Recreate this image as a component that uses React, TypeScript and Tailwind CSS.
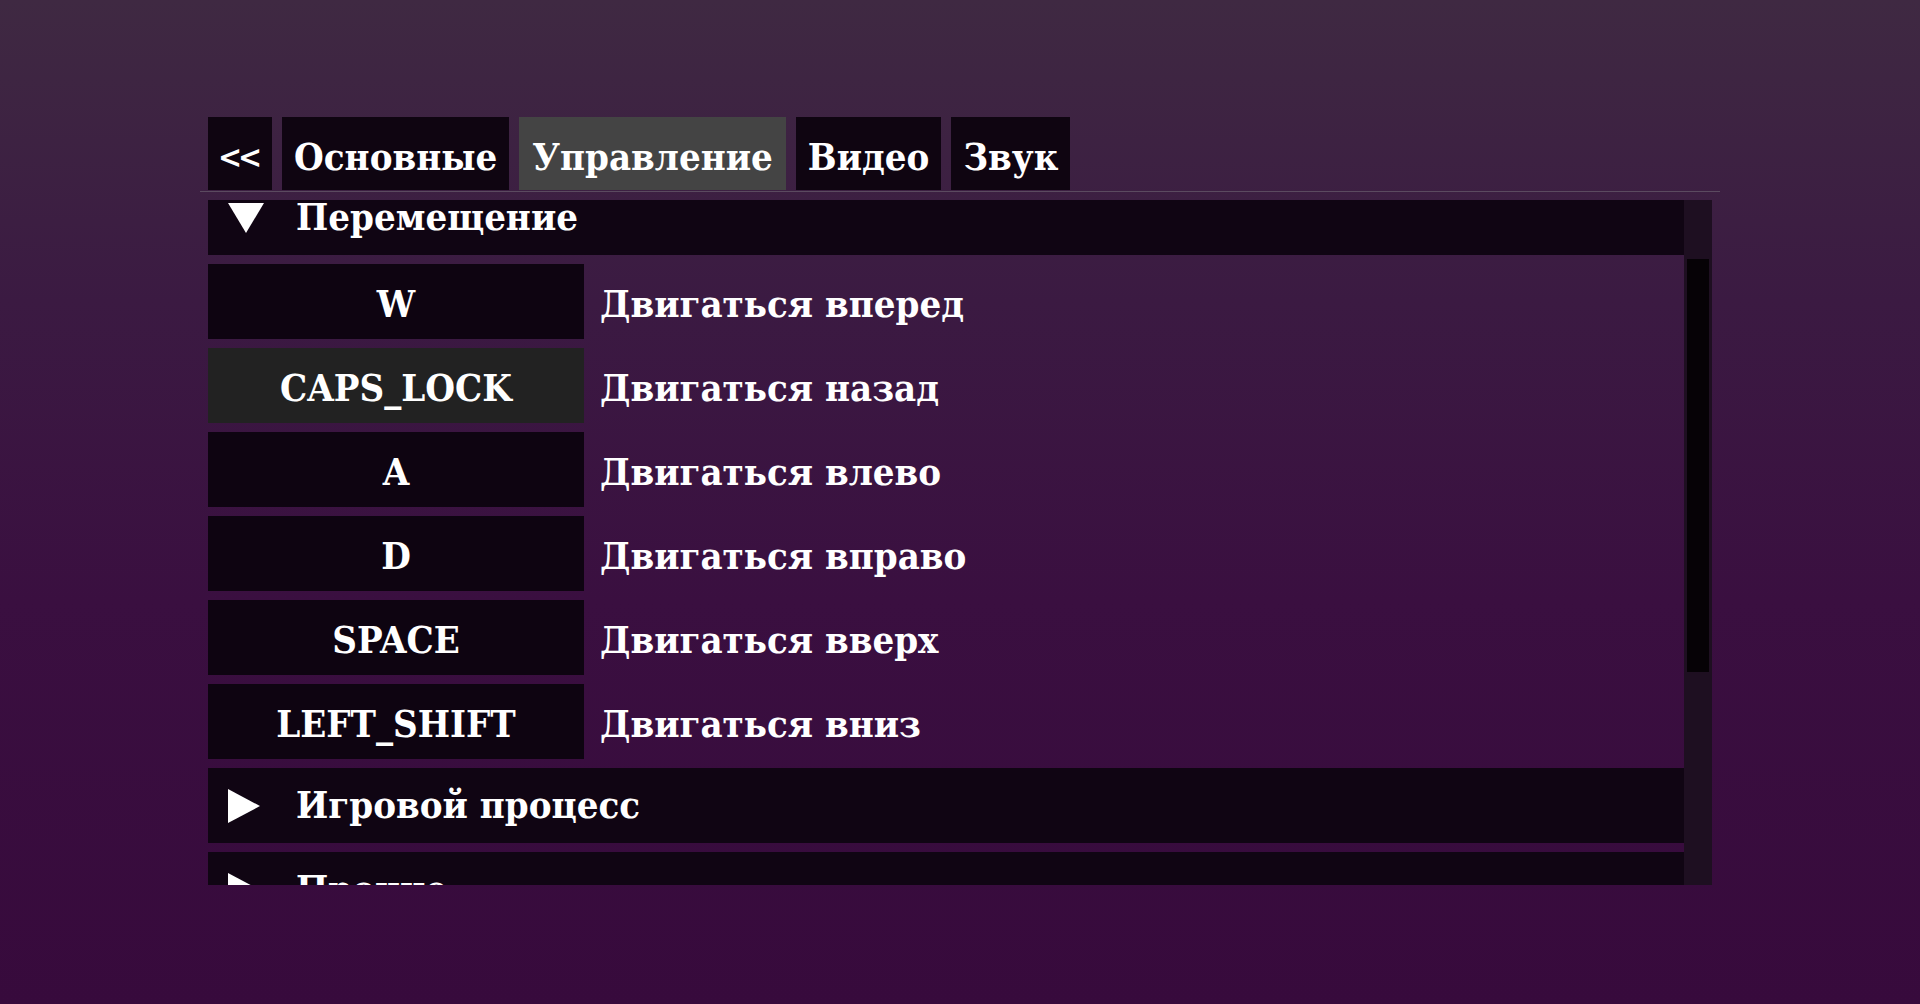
import React from "react";

const tabs = [
  { label: "Основные", active: false },
  { label: "Управление", active: true },
  { label: "Видео", active: false },
  { label: "Звук", active: false },
];

const binds = [
  { key: "W", action: "Двигаться вперед", hover: false },
  { key: "CAPS_LOCK", action: "Двигаться назад", hover: true },
  { key: "A", action: "Двигаться влево", hover: false },
  { key: "D", action: "Двигаться вправо", hover: false },
  { key: "SPACE", action: "Двигаться вверх", hover: false },
  { key: "LEFT_SHIFT", action: "Двигаться вниз", hover: false },
];

function Header({ title, open }: { title: string; open: boolean }) {
  return (
    <div className="flex h-[75px] shrink-0 items-center bg-[#100513]">
      <div className="flex w-[88px] items-center pl-[20px]">
        {open ? (
          <svg width="36" height="30" viewBox="0 0 36 30">
            <polygon points="0,0 36,0 18,30" fill="#ffffff" />
          </svg>
        ) : (
          <svg width="32" height="34" viewBox="0 0 32 34">
            <polygon points="0,0 32,17 0,34" fill="#ffffff" />
          </svg>
        )}
      </div>
      <span className="pb-[2px]">{title}</span>
    </div>
  );
}

export default function App() {
  return (
    <div className="h-[1004px] w-[1920px] overflow-hidden bg-[linear-gradient(180deg,#3f2942_0%,#3b1a42_30%,#3a0f40_60%,#370a3c_100%)] font-['DejaVu_Serif_Condensed','DejaVu_Serif',serif] text-[38px] font-bold leading-none text-white [font-stretch:condensed]">
      <div className="ml-[200px] w-[1520px] pt-[117px]">
        <div className="flex h-[73px] gap-[10px] pl-[8px]">
          <div className="flex w-[64px] items-center justify-center bg-[#0f0511] pt-[6px] text-[32px] tracking-[-4px]">
            <span className="pr-[4px]">{"<<"}</span>
          </div>
          {tabs.map((t) => (
            <div
              key={t.label}
              className={
                t.active
                  ? "flex items-center bg-[#444444] px-[13px] pt-[6px]"
                  : "flex items-center bg-[#0f0511] px-[12px] pt-[6px]"
              }
            >
              {t.label}
            </div>
          ))}
        </div>
        <div className="mt-px h-px bg-[#5b4a60]" />
        <div className="ml-[8px] mt-[8px] flex h-[685px] w-[1504px]">
          <div className="w-[1476px] overflow-hidden">
            <div className="-mt-[20px] flex flex-col gap-[9px]">
              <Header title="Перемещение" open />
              {binds.map((b) => (
                <div key={b.key} className="flex h-[75px] shrink-0 items-center">
                  <div
                    className={
                      b.hover
                        ? "flex h-full w-[376px] items-center justify-center bg-[#222222] pt-[5px]"
                        : "flex h-full w-[376px] items-center justify-center bg-[#0e0411] pt-[5px]"
                    }
                  >
                    {b.key}
                  </div>
                  <div className="ml-[16px] pt-[5px]">{b.action}</div>
                </div>
              ))}
              <Header title="Игровой процесс" open={false} />
              <Header title="Прочие" open={false} />
            </div>
          </div>
          <div className="w-[28px] bg-[#1e0f21] pt-[59px]">
            <div className="mx-[3px] h-[413px] bg-[#060206]" />
          </div>
        </div>
      </div>
    </div>
  );
}
